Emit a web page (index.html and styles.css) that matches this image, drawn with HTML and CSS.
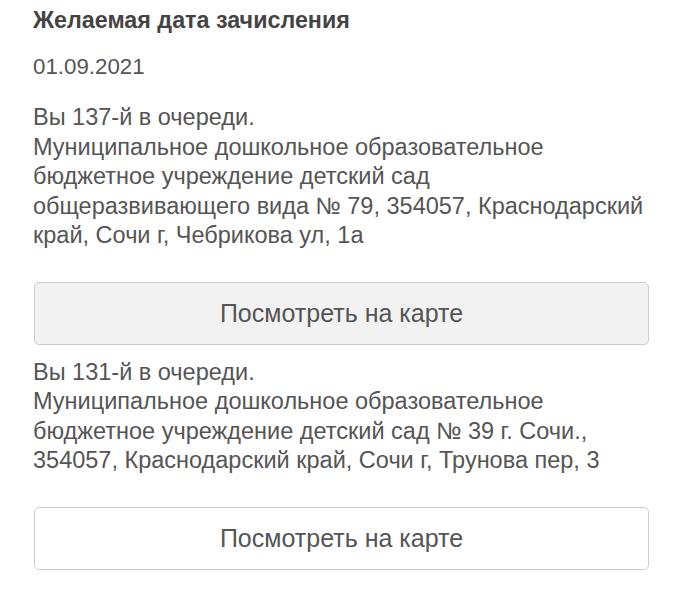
FILE: index.html
```html
<!DOCTYPE html>
<html lang="ru">
<head>
<meta charset="utf-8">
<link rel="stylesheet" href="styles.css">
</head>
<body>
<div class="page">
  <div class="field-title">Желаемая дата зачисления</div>
  <div class="field-value">01.09.2021</div>

  <div class="queue queue--first">
    <p class="queue-text">Вы 137-й в очереди.<br>Муниципальное дошкольное образовательное<br>бюджетное учреждение детский сад<br>общеразвивающего вида № 79, 354057, Краснодарский<br>край, Сочи г, Чебрикова ул, 1а</p>
    <button class="map-btn map-btn--active">Посмотреть на карте</button>
  </div>

  <div class="queue">
    <p class="queue-text">Вы 131-й в очереди.<br>Муниципальное дошкольное образовательное<br>бюджетное учреждение детский сад № 39 г. Сочи.,<br>354057, Краснодарский край, Сочи г, Трунова пер, 3</p>
    <button class="map-btn">Посмотреть на карте</button>
  </div>
</div>
</body>
</html>
```
FILE: styles.css
```css
html, body {
  margin: 0;
  padding: 0;
  background: #ffffff;
}

.page {
  font-family: "Liberation Sans", Arial, sans-serif;
  color: #555555;
  padding: 7px 0 0 33px;
  width: 630px;
}

.field-title {
  font-size: 23.3px;
  line-height: 26px;
  font-weight: bold;
  color: #444444;
}

.field-value {
  margin-top: 21px;
  font-size: 22.3px;
  line-height: 26px;
  color: #555555;
}

.queue {
  margin-top: 13px;
}

.queue--first {
  margin-top: 23px;
}

.queue-text {
  margin: 0;
  font-size: 23.5px;
  line-height: 29.5px;
  white-space: nowrap;
  color: #555555;
}

.map-btn {
  display: block;
  box-sizing: border-box;
  width: 615px;
  height: 63px;
  margin: 31px 0 0 1px;
  border: 1px solid #cccccc;
  border-radius: 5px;
  background: #ffffff;
  font-family: "Liberation Sans", Arial, sans-serif;
  font-size: 25px;
  color: #555555;
  text-align: center;
  padding: 0;
}

.map-btn--active {
  background: #f2f2f2;
}
```
